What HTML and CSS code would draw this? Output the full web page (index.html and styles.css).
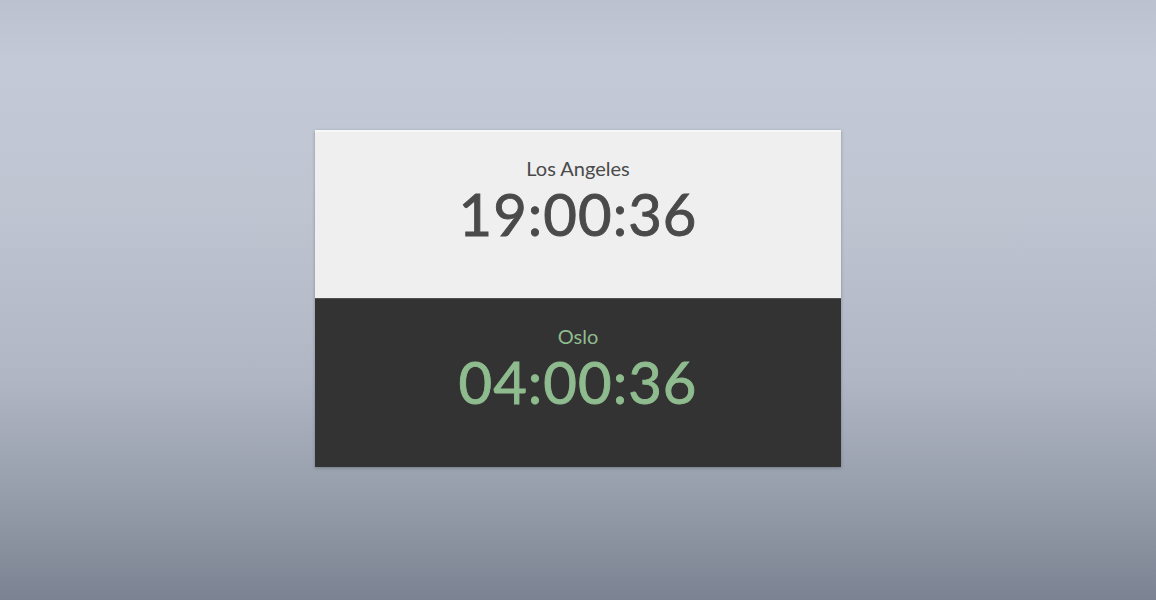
FILE: index.html
```html
<!DOCTYPE html>
<html>
<head>
<meta charset="utf-8">
<link rel="stylesheet" href="styles.css">
</head>
<body>
<main class="stage">
  <section class="card">
    <div class="zone zone-light">
      <div class="city">Los Angeles</div>
      <div class="time">19:00:36</div>
    </div>
    <div class="zone zone-dark">
      <div class="city">Oslo</div>
      <div class="time">04:00:36</div>
    </div>
  </section>
</main>
</body>
</html>
```
FILE: styles.css
```css
html, body {
  margin: 0;
  padding: 0;
}
body {
  width: 1156px;
  height: 600px;
  overflow: hidden;
  font-family: Lato, "Open Sans", sans-serif;
  background: linear-gradient(to bottom, #bbc1ce 0px, #c3c9d6 60px, #bfc5d1 200px, #b0b6c3 380px, #9aa1ae 480px, #7b8392 600px);
}
.stage {
  height: 600px;
  display: flex;
  align-items: flex-start;
  justify-content: center;
  padding-top: 130px;
  box-sizing: border-box;
}
.card {
  width: 526px;
  display: flex;
  flex-direction: column;
  box-shadow: 0 1px 3px rgba(40, 45, 60, 0.35);
}
.zone {
  display: flex;
  flex-direction: column;
  align-items: center;
  box-sizing: border-box;
}
.zone-light {
  height: 168px;
  background: #efeff0;
  border-top: 2px solid #f7f7f8;
  color: #4a4a4a;
  padding-top: 24px;
}
.zone-dark {
  height: 169px;
  background: #333333;
  border-top: 1px solid #505050;
  color: #8fbc8f;
  padding-top: 25px;
}
.city {
  font-size: 20px;
  line-height: 24px;
}
.time {
  font-size: 58px;
  line-height: 64px;
  margin-top: 2px;
  letter-spacing: 1px;
  -webkit-text-stroke: 0.9px currentColor;
}
```
